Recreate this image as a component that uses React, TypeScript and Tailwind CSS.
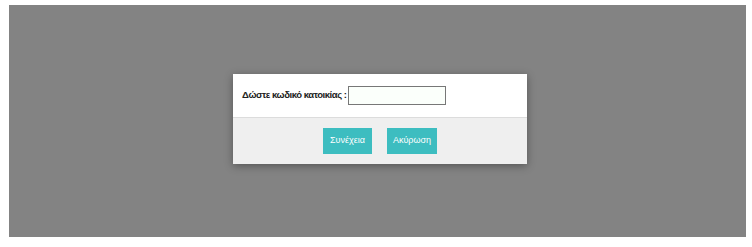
import React, { useState } from 'react';

export default function App() {
  const [code, setCode] = useState('');

  return (
    <div className="w-[752px] h-[247px] bg-white pl-[9px] pt-[5px] pr-[6px] pb-[10px] flex">
      <div className="flex-1 bg-[#838383] pl-[224px] pt-[69px]">
        <div className="w-[294px] bg-white shadow-[0_2px_8px_rgba(0,0,0,0.35)] font-['Liberation_Sans',Arial,sans-serif]">
          <div className="h-[43px] flex items-center pl-[9px]">
            <label className="text-[9.5px] font-bold text-[#222] tracking-[-0.45px] mr-[1px]">Δώστε κωδικό κατοικίας :</label>
            <input
              value={code}
              onChange={(e) => setCode(e.target.value)}
              className="w-[98px] h-[19px] border border-[#777] bg-[#fbfffb] outline-none"
            />
          </div>
          <div className="h-[47px] bg-[#efefef] border-t border-[#dcdcdc] flex items-center justify-center gap-[15px]">
            <button className="w-[49px] h-[26px] bg-[#3dbdc0] text-white text-[9px]">Συνέχεια</button>
            <button className="w-[50px] h-[26px] bg-[#3dbdc0] text-white text-[9px]">Ακύρωση</button>
          </div>
        </div>
      </div>
    </div>
  );
}
